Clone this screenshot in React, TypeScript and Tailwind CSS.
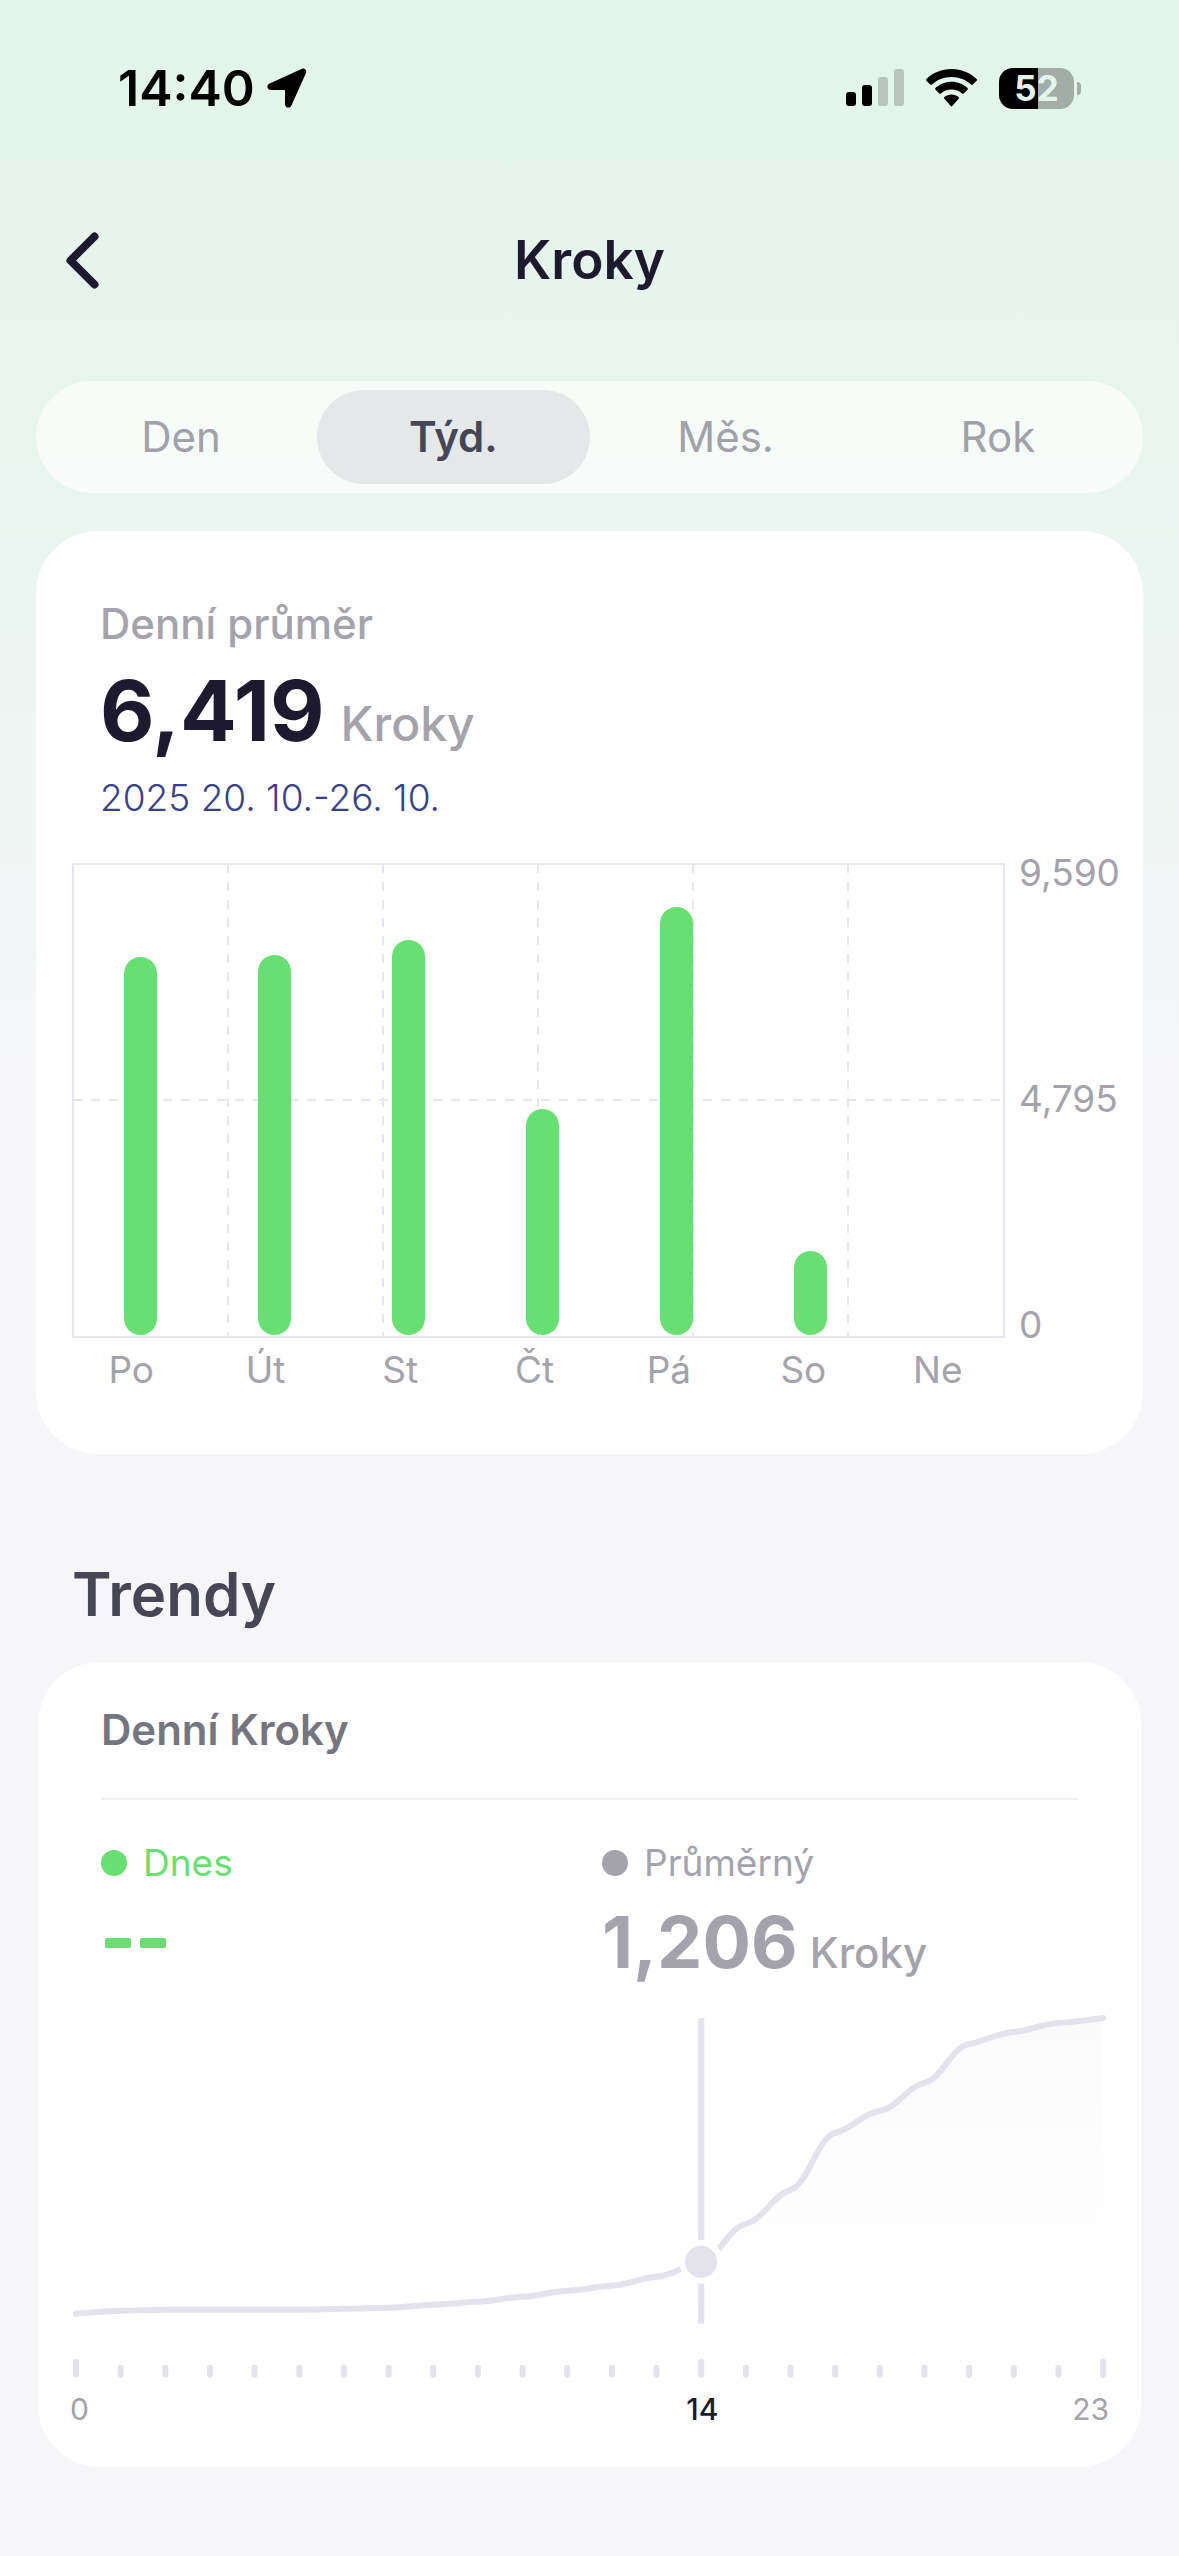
import { useId, useState } from "react";

const PERIODS = ["Den", "Týd.", "Měs.", "Rok"];

const WEEK = [
  { day: "Po", top: 94 },
  { day: "Út", top: 92 },
  { day: "St", top: 77 },
  { day: "Čt", top: 246 },
  { day: "Pá", top: 44 },
  { day: "So", top: 388 },
  { day: "Ne", top: null },
];

// Vertical position of the cumulative average for each hour of the day.
const HOURS = [
  302, 299, 298, 298, 298, 298, 297, 296, 293, 290, 285, 279, 274, 265, 250,
  212, 178, 121, 99, 71, 32, 20, 11, 6,
];
const CURRENT_HOUR = 14;
const HOUR_STEP = 44.7;
const hourX = (hour: number) => 10 + hour * HOUR_STEP;

function trendPath() {
  const slope = (i: number) =>
    i === 0 || i === HOURS.length - 1
      ? 0
      : ((HOURS[i + 1] - HOURS[i - 1]) / 2) * 0.3;
  const reach = 0.4;
  let d = `M${hourX(0)} ${HOURS[0]}`;
  for (let i = 1; i < HOURS.length; i++) {
    const c1x = hourX(i - 1) + HOUR_STEP * reach;
    const c1y = HOURS[i - 1] + (i === 1 ? HOURS[1] - HOURS[0] : slope(i - 1)) * reach;
    const c2x = hourX(i) - HOUR_STEP * reach;
    const end = i === HOURS.length - 1 ? HOURS[i] - HOURS[i - 1] : slope(i);
    const c2y = HOURS[i] - end * reach;
    d += ` C${c1x} ${c1y} ${c2x} ${c2y} ${hourX(i)} ${HOURS[i]}`;
  }
  return d;
}

function StatusBar() {
  return (
    <div className="flex h-[176px] items-center justify-between pr-[98px] pl-[118px]">
      <div className="flex items-center gap-3 text-black">
        <span className="text-[50px] leading-[60px] font-semibold">14:40</span>
        <svg viewBox="0 0 40 40" className="h-10 w-10" aria-hidden="true">
          <path
            d="M34.6 .9 2.6 15.600C-1 17.300 .2 22 3.800 22H17.300C17.800 22 18 22.200 18 22.700V36C18 40 22.900 41 24.400 37.400L38.900 5.300C40.300 2.200 37.600-.5 34.600 .9Z"
            fill="currentColor"
          />
        </svg>
      </div>
      <div className="flex items-center">
        <svg viewBox="0 0 58 38" className="mr-[22px] h-[38px] w-[58px]" aria-hidden="true">
          <rect x="0" y="23" width="10" height="14" rx="3" />
          <rect x="16" y="16" width="10" height="21" rx="3" />
          <rect x="32" y="8" width="10" height="29" rx="3" fill="#b7c5bd" />
          <rect x="48" y="0" width="10" height="37" rx="3" fill="#b7c5bd" />
        </svg>
        <svg viewBox="0 0 51 38" className="mr-[22px] h-[38px] w-[51px]" aria-hidden="true">
          <path d="M25.500 0C35.300 0 44.100 3.800 50.600 10 51.100 10.500 51.100 11.200 50.600 11.700L46.800 15.500C46.300 16 45.700 16 45.200 15.500 40 10.700 33.100 7.900 25.500 7.900S11 10.700 5.800 15.500C5.300 16 4.700 16 4.200 15.500L.4 11.700C-.1 11.200-.1 10.500 .4 10 6.900 3.800 15.700 0 25.500 0Z" />
          <path d="M25.500 12.800C31.700 12.800 37.300 15.200 41.500 19 42 19.500 42 20.200 41.500 20.700L37.700 24.500C37.200 25 36.600 25 36.100 24.500 33.300 22.100 29.600 20.600 25.500 20.600S17.700 22.100 14.900 24.500C14.400 25 13.800 25 13.300 24.500L9.500 20.700C9 20.200 9 19.500 9.500 19 13.700 15.200 19.300 12.800 25.500 12.800Z" />
          <path d="M25.500 25.600C28.200 25.600 30.700 26.500 32.600 28.100 33.100 28.500 33.100 29.200 32.600 29.700L26.300 37.100C25.800 37.600 25.200 37.600 24.700 37.100L18.400 29.700C17.900 29.200 17.900 28.500 18.400 28.100 20.300 26.500 22.800 25.600 25.500 25.600Z" />
        </svg>
        <div className="flex items-center gap-[3px]">
          <div className="flex h-[41px] w-[75px] items-center justify-center rounded-[14px] bg-linear-to-r from-black from-[39px] to-[#a1ada6] to-[39px] text-[35px] leading-[41px] font-bold text-[#e3f4ea]">
            52
          </div>
          <span className="h-[13px] w-1 rounded-r-full bg-[#a1ada6]" />
        </div>
      </div>
    </div>
  );
}

function Header() {
  return (
    <header className="grid h-[168px] grid-cols-[1fr_auto_1fr] items-center px-[66px]">
      <button type="button" aria-label="Zpět" className="justify-self-start">
        <svg viewBox="0 0 33 57" className="h-[57px] w-[33px]" aria-hidden="true">
          <path
            d="M28.500 4.500 4.500 28.500l24 24"
            fill="none"
            stroke="#1c1a2c"
            strokeWidth="8"
            strokeLinecap="round"
            strokeLinejoin="round"
          />
        </svg>
      </button>
      <h1 className="text-[53px] leading-[60px] font-semibold text-[#1c1a2c]">Kroky</h1>
    </header>
  );
}

function PeriodTabs() {
  const [active, setActive] = useState("Týd.");
  return (
    <div role="tablist" className="flex rounded-full bg-white/65 p-[9px]">
      {PERIODS.map((period) => (
        <button
          key={period}
          type="button"
          role="tab"
          aria-selected={period === active}
          onClick={() => setActive(period)}
          className={
            period === active
              ? "h-[94px] flex-1 rounded-full bg-[#e4e8e8] text-[42px] leading-none font-semibold text-[#474655]"
              : "h-[94px] flex-1 rounded-full text-[42px] leading-none text-[#a0a1a9]"
          }
        >
          {period}
        </button>
      ))}
    </div>
  );
}

function WeekChart() {
  return (
    <div className="flex pl-9">
      <div className="min-w-0 flex-1">
        <svg viewBox="0 0 933 475" className="block h-auto w-full" role="img" aria-label="Kroky podle dnů">
          <g fill="none" stroke="#e7e6ee" strokeWidth="2">
            <rect x="1" y="1" width="931" height="473" />
            {[156, 311, 466, 621, 776].map((x) => (
              <path key={x} d={`M${x} 1V474`} strokeDasharray="9 9" />
            ))}
            <path d="M1 237H932" strokeDasharray="9 9" />
          </g>
          {WEEK.map(({ day, top }, i) =>
            top === null ? null : (
              <rect
                key={day}
                x={52 + i * 134}
                y={top}
                width="33"
                height={472 - top}
                rx="16.500"
                fill="#68df73"
              />
            ),
          )}
        </svg>
        <div className="-ml-2 grid grid-cols-7 pt-[10px] text-center text-[37px] leading-[44px] text-[#a4a3ab]">
          {WEEK.map(({ day }) => (
            <span key={day}>{day}</span>
          ))}
        </div>
      </div>
      <div className="mb-[45px] flex w-[138px] flex-col justify-between pl-[14px] text-[37px] leading-[44px] text-[#a4a3ab]">
        <span className="-mt-3">9,590</span>
        <span>4,795</span>
        <span>0</span>
      </div>
    </div>
  );
}

function TrendChart() {
  const fillId = useId();
  const line = trendPath();
  const markerX = hourX(CURRENT_HOUR);
  const markerY = HOURS[CURRENT_HOUR];
  return (
    <div className="px-7 pt-[2px]">
      <svg viewBox="0 0 1048 372" className="block h-auto w-full" role="img" aria-label="Průběh kroků během dne">
        <defs>
          <linearGradient id={fillId} x1="0" y1="0" x2="0" y2="1">
            <stop offset="0" stopColor="#fafafb" />
            <stop offset="1" stopColor="#ffffff" />
          </linearGradient>
        </defs>
        <path d={`${line} V312 H${hourX(0)} Z`} fill={`url(#${fillId})`} />
        <path d={line} fill="none" stroke="#e4e3ec" strokeWidth="6" strokeLinecap="round" />
        <path d={`M${markerX} 6V312`} stroke="#e4e3ec" strokeWidth="6" />
        <circle cx={markerX} cy={markerY} r="22" fill="#ffffff" />
        <circle cx={markerX} cy={markerY} r="16" fill="#e4e3ec" />
        {HOURS.map((_, hour) => {
          const major = hour === 0 || hour === CURRENT_HOUR || hour === 23;
          return (
            <rect
              key={hour}
              x={hourX(hour) - 3}
              y={major ? 347 : 353}
              width="6"
              height={major ? 19 : 13}
              rx="3"
              fill="#e4e3ec"
            />
          );
        })}
      </svg>
      <div className="grid grid-cols-[14fr_9fr] px-1 pt-[7px] text-[30px] leading-9 text-[#a4a3ab]">
        <div className="flex justify-between">
          <span>0</span>
          <span className="-mr-4 font-medium text-[#1c1a2c]">14</span>
        </div>
        <span className="text-right">23</span>
      </div>
    </div>
  );
}

export default function App() {
  return (
    <div className="min-h-screen bg-[#f6f6f9] bg-[linear-gradient(180deg,#e2f4e9_0px,#e7f5ee_380px,#f6f6f9_1100px)] bg-no-repeat pb-[89px] font-['Inter',sans-serif]">
      <StatusBar />
      <Header />
      <main className="px-9 pt-[37px]">
        <PeriodTabs />

        <section className="mt-[38px] rounded-[62px] bg-white pt-[66px] pb-[62px]">
          <div className="px-[64px]">
            <h2 className="text-[42px] leading-[54px] font-medium text-[#a4a3ab]">Denní průměr</h2>
            <p className="flex items-baseline gap-4 leading-[120px]">
              <span className="text-[84px] font-bold text-[#1c1a2c]">6,419</span>
              <span className="text-[48px] font-medium text-[#a4a3ab]">Kroky</span>
            </p>
            <p className="-mt-2 text-[37px] leading-[44px] font-light text-[#3a4287]">2025 20. 10.-26. 10.</p>
          </div>
          <div className="mt-[43px]">
            <WeekChart />
          </div>
        </section>

        <h2 className="mt-[104px] pl-9 text-[60px] leading-[72px] font-semibold text-[#474655]">Trendy</h2>

        <section className="mx-[2px] mt-8 rounded-[62px] bg-white pt-[42px] pb-10">
          <div className="px-[63px]">
            <h3 className="border-b-2 border-[#f0f0f4] pb-[42px] text-[42px] leading-[52px] font-semibold text-[#757580]">
              Denní Kroky
            </h3>
            <div className="grid grid-cols-[501fr_476fr] pt-[41px]">
              <div className="text-[#68df73]">
                <div className="flex items-center gap-4 text-[37px] leading-[44px]">
                  <span className="size-[26px] rounded-full bg-current" />
                  Dnes
                </div>
                <p className="flex h-[116px] items-center gap-[9px] pl-1" aria-label="Bez údajů">
                  <span className="h-[10px] w-[26px] rounded-xs bg-current" />
                  <span className="h-[10px] w-[26px] rounded-xs bg-current" />
                </p>
              </div>
              <div className="text-[#a4a3ab]">
                <div className="flex items-center gap-4 text-[37px] leading-[44px]">
                  <span className="size-[26px] rounded-full bg-current" />
                  Průměrný
                </div>
                <p className="flex items-baseline gap-3 leading-[114px]">
                  <span className="text-[72px] font-bold">1,206</span>
                  <span className="text-[42px] font-medium">Kroky</span>
                </p>
              </div>
            </div>
          </div>
          <TrendChart />
        </section>
      </main>
    </div>
  );
}
